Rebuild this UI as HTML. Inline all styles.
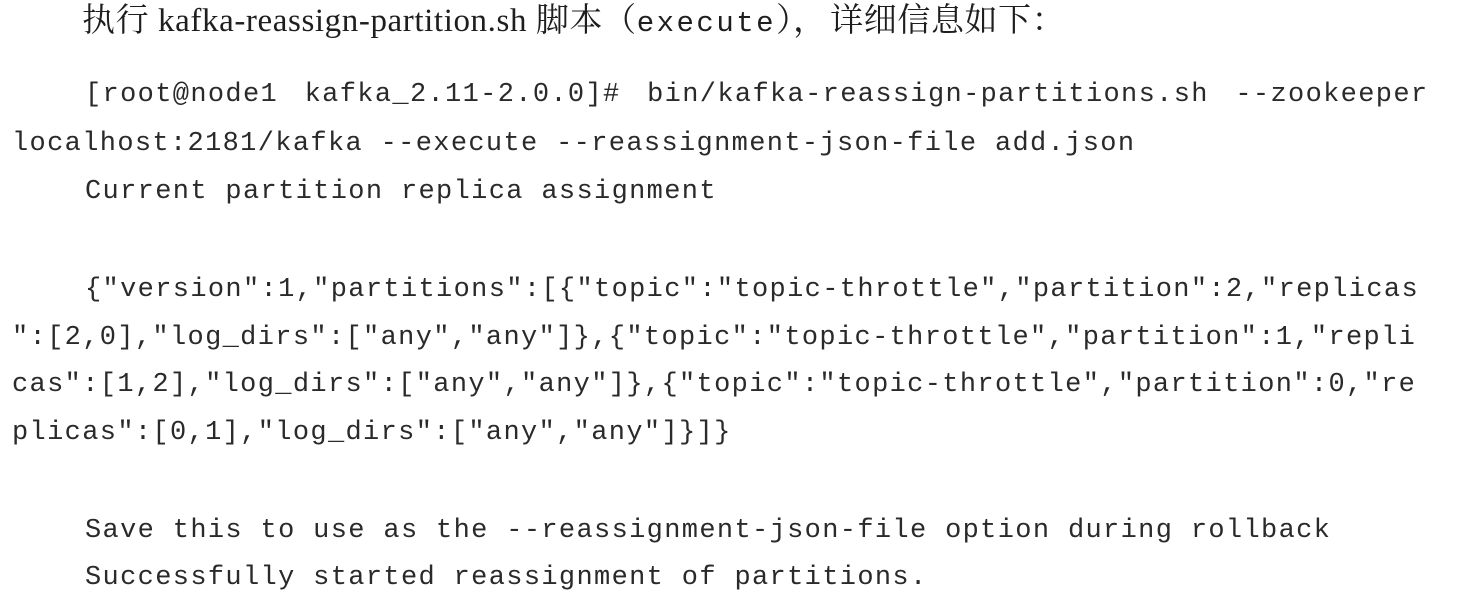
<!DOCTYPE html>
<html><head><meta charset="utf-8"><style>
html,body{margin:0;padding:0;background:#fff;width:1480px;height:606px;overflow:hidden;position:relative}
.l{position:absolute;font-family:"Liberation Mono","Noto Sans CJK SC",monospace;font-size:27px;letter-spacing:1.35px;line-height:27px;color:#2a2a2a;white-space:pre}
.t{position:absolute;left:82px;top:2px;font-family:"Liberation Serif","Noto Serif CJK SC",serif;font-size:33px;letter-spacing:0.6px;line-height:38px;color:#1e1e1e;white-space:pre}
.t .m{font-family:"Liberation Mono",monospace;font-size:29px;letter-spacing:2.5px}
</style></head><body>
<div class="t">执行 kafka-reassign-partition.sh 脚本（<span class="m">execute</span>）<span style="letter-spacing:4px">，</span>详细信息如下：</div>
<div class="l" style="left:85px;top:82px;word-spacing:9px">[root@node1 kafka_2.11-2.0.0]# bin/kafka-reassign-partitions.sh --zookeeper</div>
<div class="l" style="left:12px;top:131px">localhost:2181/kafka --execute --reassignment-json-file add.json</div>
<div class="l" style="left:85px;top:179px">Current partition replica assignment</div>
<div class="l" style="left:85px;top:277px">{"version":1,"partitions":[{"topic":"topic-throttle","partition":2,"replicas</div>
<div class="l" style="left:12px;top:325px">":[2,0],"log_dirs":["any","any"]},{"topic":"topic-throttle","partition":1,"repli</div>
<div class="l" style="left:12px;top:372px">cas":[1,2],"log_dirs":["any","any"]},{"topic":"topic-throttle","partition":0,"re</div>
<div class="l" style="left:12px;top:420px">plicas":[0,1],"log_dirs":["any","any"]}]}</div>
<div class="l" style="left:85px;top:518px">Save this to use as the --reassignment-json-file option during rollback</div>
<div class="l" style="left:85px;top:565px">Successfully started reassignment of partitions.</div>
</body></html>
